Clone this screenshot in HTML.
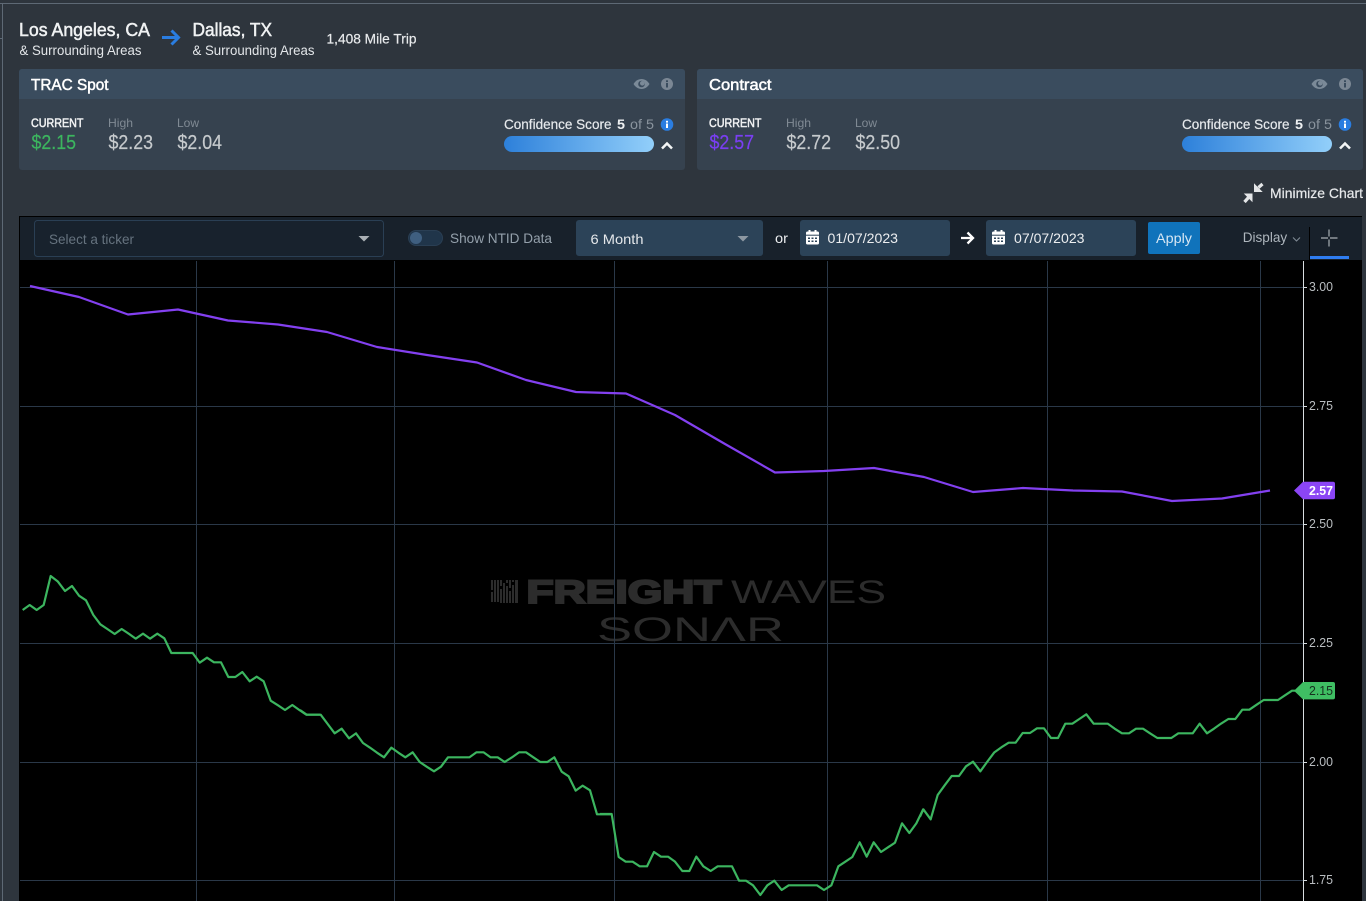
<!DOCTYPE html>
<html lang="en">
<head>
<meta charset="utf-8">
<title>Los Angeles, CA to Dallas, TX</title>
<style>
html,body{margin:0;padding:0;width:1366px;height:901px;overflow:hidden;background:#2e353d}
svg{display:block;position:absolute;left:0;top:0}
text{font-family:"Liberation Sans",Arial,sans-serif;white-space:pre}
.med{stroke:currentColor;stroke-width:.5px}
.lt{stroke:currentColor;stroke-width:.2px}
</style>
</head>
<body>
<svg width="1366" height="901" viewBox="0 0 1366 901" xmlns="http://www.w3.org/2000/svg">
<defs>
<linearGradient id="conf" x1="0" x2="1" y1="0" y2="0"><stop offset="0" stop-color="#2d80da"/><stop offset="1" stop-color="#92cffa"/></linearGradient>
<g id="card">
  <rect x="19" y="69" width="666" height="101" rx="3" fill="#36424f"/>
  <path d="M19 99V72a3 3 0 0 1 3-3h660a3 3 0 0 1 3 3v27z" fill="#3a4c5e"/>
  <text x="31" y="127" font-size="12" class="med" color="#f2f3f4" fill="#f2f3f4" textLength="52.500" lengthAdjust="spacingAndGlyphs">CURRENT</text>
  <text x="108" y="127" font-size="12" fill="#808a94" textLength="25" lengthAdjust="spacingAndGlyphs">High</text>
  <text x="177" y="127" font-size="12" fill="#808a94" textLength="22" lengthAdjust="spacingAndGlyphs">Low</text>
  <path d="M633.500 84c2-3.300 4.800-5 8-5s6 1.700 8 5c-2 3.300-4.800 5-8 5s-6-1.700-8-5z" fill="#7b8a98"/>
  <circle cx="641.500" cy="84" r="3.300" fill="#3a4c5e"/><circle cx="642.300" cy="83.300" r="2.300" fill="#7b8a98"/>
  <circle cx="667" cy="84" r="6" fill="#7b8794"/>
  <rect x="666" y="83" width="2" height="4.500" fill="#3a4c5e"/><rect x="666" y="80.300" width="2" height="1.800" fill="#3a4c5e"/>
  <text x="504" y="129" font-size="14" class="lt" color="#e6e9ec" fill="#e6e9ec" textLength="107.500" lengthAdjust="spacingAndGlyphs">Confidence Score</text>
  <text x="617" y="129" font-size="14" font-weight="bold" fill="#eef0f2" textLength="8" lengthAdjust="spacingAndGlyphs">5</text>
  <text x="630" y="129" font-size="14" fill="#8a949e" textLength="24" lengthAdjust="spacingAndGlyphs">of 5</text>
  <circle cx="667" cy="124.500" r="6.300" fill="#2a7de1"/>
  <rect x="666" y="123.500" width="2" height="4.500" fill="#fff"/><rect x="666" y="120.800" width="2" height="1.800" fill="#fff"/>
  <rect x="504" y="136" width="150" height="16" rx="8" fill="url(#conf)"/>
  <path d="M662 148.500l5-5 5 5" fill="none" stroke="#f4f6f7" stroke-width="2.500"/>
</g>
<g id="cal">
  <rect x="0" y="1.500" width="13" height="13" rx="1.500" fill="#fff"/>
  <rect x="2.500" y="0" width="2" height="3.500" fill="#fff"/><rect x="8.500" y="0" width="2" height="3.500" fill="#fff"/>
  <rect x="0" y="4.700" width="13" height="1" fill="#2c4358"/>
  <path d="M2 7.500h2v1.500H2zM5.500 7.500h2v1.500h-2zM9 7.500h2v1.500H9zM2 10.500h2V12H2zM5.500 10.500h2V12h-2zM9 10.500h2V12H9z" fill="#2c4358"/>
</g>
</defs>

<!-- page edge lines -->
<rect x="0" y="3" width="1366" height="1" fill="#5e6975"/>
<rect x="2" y="3" width="1" height="898" fill="#5e6975"/>
<rect x="0" y="38" width="2" height="1" fill="#5e6975"/>

<!-- lane header -->
<text x="19" y="36" font-size="18" class="med" color="#f0f2f3" fill="#f0f2f3" textLength="131" lengthAdjust="spacingAndGlyphs">Los Angeles, CA</text>
<text x="19.500" y="55" font-size="13.500" fill="#e3e6e9" textLength="122" lengthAdjust="spacingAndGlyphs">&amp; Surrounding Areas</text>
<path d="M162 37.500h16M171.500 30.500l7 7-7 7" fill="none" stroke="#2a7de1" stroke-width="3"/>
<text x="192.500" y="36" font-size="18" class="med" color="#f0f2f3" fill="#f0f2f3" textLength="79.500" lengthAdjust="spacingAndGlyphs">Dallas, TX</text>
<text x="192.500" y="55" font-size="13.500" fill="#e3e6e9" textLength="122" lengthAdjust="spacingAndGlyphs">&amp; Surrounding Areas</text>
<text x="326.500" y="43.500" font-size="14" class="lt" color="#e8eaec" fill="#e8eaec" textLength="90" lengthAdjust="spacingAndGlyphs">1,408 Mile Trip</text>

<!-- cards -->
<use href="#card"/>
<text x="31" y="90" font-size="16" class="med" color="#fff" fill="#fff" textLength="77.500" lengthAdjust="spacingAndGlyphs">TRAC Spot</text>
<text x="31.500" y="149" font-size="20" class="lt" color="#3cb55f" fill="#3cb55f" textLength="44.500" lengthAdjust="spacingAndGlyphs">$2.15</text>
<text x="108.500" y="149" font-size="20" class="lt" color="#c6cacd" fill="#c6cacd" textLength="44.500" lengthAdjust="spacingAndGlyphs">$2.23</text>
<text x="177.500" y="149" font-size="20" class="lt" color="#c6cacd" fill="#c6cacd" textLength="44.500" lengthAdjust="spacingAndGlyphs">$2.04</text>

<use href="#card" x="678"/>
<text x="709" y="90" font-size="16" class="med" color="#fff" fill="#fff" textLength="62.500" lengthAdjust="spacingAndGlyphs">Contract</text>
<text x="709.500" y="149" font-size="20" class="lt" color="#7a3ff2" fill="#7a3ff2" textLength="44.500" lengthAdjust="spacingAndGlyphs">$2.57</text>
<text x="786.500" y="149" font-size="20" class="lt" color="#c6cacd" fill="#c6cacd" textLength="44.500" lengthAdjust="spacingAndGlyphs">$2.72</text>
<text x="855.500" y="149" font-size="20" class="lt" color="#c6cacd" fill="#c6cacd" textLength="44.500" lengthAdjust="spacingAndGlyphs">$2.50</text>

<!-- minimize chart -->
<path d="M1254.500 191.500v-7l7 7zM1252 194h-7l7 7z" fill="#e4e6e8" stroke="#e4e6e8" stroke-width="1"/>
<path d="M1258.500 187.500l4-3.500M1248.500 197.500l-4 4.500" fill="none" stroke="#e4e6e8" stroke-width="3.200"/>
<text x="1270" y="198" font-size="14" class="lt" color="#e8eaec" fill="#e8eaec" textLength="93" lengthAdjust="spacingAndGlyphs">Minimize Chart</text>

<!-- chart frame -->
<rect x="19" y="216" width="1343" height="685" fill="#000"/>
<rect x="20" y="217" width="1342" height="43" fill="#18212b"/>

<!-- toolbar -->
<rect x="34.500" y="220.500" width="349" height="36" rx="3" fill="#18222d" stroke="#2a3f54"/>
<text x="49" y="244" font-size="14" fill="#66737f" textLength="85" lengthAdjust="spacingAndGlyphs">Select a ticker</text>
<path d="M358.500 236h11l-5.500 5.500z" fill="#a9afb4"/>
<rect x="408.500" y="230.500" width="34" height="15" rx="7.500" fill="#20354a" stroke="#2a3f54"/>
<circle cx="416" cy="238" r="6" fill="#3f5f80"/>
<text x="450" y="243" font-size="14" fill="#94a0ab" textLength="102" lengthAdjust="spacingAndGlyphs">Show NTID Data</text>

<rect x="576" y="220" width="187" height="36" rx="3" fill="#2c4358"/>
<text x="590.500" y="244" font-size="14" fill="#e4e7ea" textLength="53" lengthAdjust="spacingAndGlyphs">6 Month</text>
<path d="M737.500 236h11l-5.500 5.500z" fill="#8d98a2"/>
<text x="775" y="243" font-size="14" fill="#eceef0" textLength="13" lengthAdjust="spacingAndGlyphs">or</text>

<rect x="800" y="220" width="150" height="36" rx="3" fill="#2c4358"/>
<use href="#cal" x="806" y="230"/>
<text x="827.500" y="243" font-size="14" fill="#eceef0" textLength="70.500" lengthAdjust="spacingAndGlyphs">01/07/2023</text>
<path d="M961 238h11M967.500 232.500l5.500 5.500-5.500 5.500" fill="none" stroke="#fff" stroke-width="2.300"/>
<rect x="986" y="220" width="150" height="36" rx="3" fill="#2c4358"/>
<use href="#cal" x="992" y="230"/>
<text x="1014" y="243" font-size="14" fill="#eceef0" textLength="70.500" lengthAdjust="spacingAndGlyphs">07/07/2023</text>
<rect x="1148" y="222" width="52" height="32" rx="2" fill="#1073bb"/>
<text x="1156" y="243" font-size="14" fill="#d6e6f3" textLength="36" lengthAdjust="spacingAndGlyphs">Apply</text>

<text x="1242.700" y="242" font-size="14" fill="#aeb6bd" textLength="44.500" lengthAdjust="spacingAndGlyphs">Display</text>
<path d="M1293 237.500l3.500 3.500 3.500-3.500" fill="none" stroke="#7f8a94" stroke-width="1.100"/>
<rect x="1309" y="227" width="1" height="33" fill="#000"/>
<path d="M1321 238h7M1330 238h7.500M1329 229.500v7M1329 239.500v7" stroke="#a8aeb3" stroke-width="1.200" fill="none"/>
<rect x="1310" y="256" width="39" height="3" fill="#2f7df0"/>

<!-- watermark -->
<g fill="#2c2c2c">
  <path d="M491 580h2v10h-2zM491 592h2v10h-2zM494 580h2v22h-2zM497 580h2v22h-2zM500 580h2v6h-2zM500 589h2v14h-2zM503 583h2v20h-2zM506 580h2v3h-2zM506 586h2v17h-2zM509 580h2v8h-2zM509 591h2v12h-2zM512 580h2v2h-2zM512 585h2v18h-2zM515 580h3v23h-3z"/>
  <text x="526.500" y="603" font-size="32" font-weight="bold" stroke="#2c2c2c" stroke-width="2" textLength="195" lengthAdjust="spacingAndGlyphs">FREIGHT</text>
  <text x="731" y="603" font-size="32" textLength="155" lengthAdjust="spacingAndGlyphs">WAVES</text>
  <text x="597" y="641" font-size="34" textLength="187" lengthAdjust="spacingAndGlyphs">SONΛR</text>
</g>

<!-- grid -->
<g stroke="#2a3848" stroke-width="1" fill="none">
  <path d="M20 287.500H1303M20 406.500H1303M20 524.500H1303M20 643.500H1303M20 762.500H1303M20 880.500H1303"/>
  <path d="M196.500 261V901M394.500 261V901M614.500 261V901M827.500 261V901M1047.500 261V901M1260.500 261V901"/>
</g>
<rect x="1303" y="261" width="1" height="640" fill="#d8dde0"/>
<path d="M1304 287.500h3M1304 406.500h3M1304 524.500h3M1304 643.500h3M1304 762.500h3M1304 880.500h3" stroke="#d8dde0" fill="none"/>
<g font-size="12.500" fill="#b9bdc0">
  <text x="1309" y="291" textLength="24" lengthAdjust="spacingAndGlyphs">3.00</text>
  <text x="1309" y="410" textLength="24" lengthAdjust="spacingAndGlyphs">2.75</text>
  <text x="1309" y="528" textLength="24" lengthAdjust="spacingAndGlyphs">2.50</text>
  <text x="1309" y="647" textLength="24" lengthAdjust="spacingAndGlyphs">2.25</text>
  <text x="1309" y="766" textLength="24" lengthAdjust="spacingAndGlyphs">2.00</text>
  <text x="1309" y="884" textLength="24" lengthAdjust="spacingAndGlyphs">1.75</text>
</g>

<!-- contract line -->
<polyline fill="none" stroke="#8340f0" stroke-width="2.200" stroke-linejoin="round" points="30,286 79,297 128,314.500 178,309.500 228,320.500 278,324.500 327,332 377,347 427,355 477,362.500 526,380 576,392 626,393.500 675,415 725,444 775,472.500 824,471 874,468 924,477 973,492 1023,488 1073,490.500 1122,491.500 1172,501 1222,498.500 1270,490.500"/>

<!-- spot line -->
<g fill="none" stroke="#3cb55f" stroke-width="6.600" stroke-linejoin="round">
  <polyline transform="translate(0 560) scale(.33333)" points="68,150 89,135 110,150 131,135 152,48 173,64 195,93 216,78 237,107 258,121 280,165 301,193 322,207 344,222 365,207 386,221 407,236 429,221 450,236 472,221 493,235 514,279 535,279 557,279 578,279 599,308 621,293 642,307 663,307 685,351 706,351 727,336 749,364 770,350 791,364 812,422 834,436 855,450 877,435 898,450 919,464 940,464 960,464"/>
  <polyline transform="translate(300 690) scale(.33333)" points="0,60 20,74 41,74 62,74 83,102 104,130 125,116 147,145 168,130 189,159 210,173 231,188 252,202 274,173 295,188 316,202 338,187 359,216 380,230 402,244 423,230 444,202 465,202 487,202 508,202 529,187 551,187 572,202 593,202 614,216 636,202 657,187 678,187 700,202 721,216 742,216 763,202 785,245 806,259 827,302 848,287 870,301 891,373 912,373 934,373"/>
  <polyline transform="translate(600 770) scale(.33333)" points="0,132 35,132 56,261 77,275 98,275 119,289 141,289 162,246 183,260 204,260 225,275 247,303 268,303 289,260 310,289 332,303 353,289 374,289 396,289 417,332 438,332 459,346 481,375 502,346 523,332 545,360 566,346 587,346 608,346 630,346 651,346 672,360 694,346 715,289 736,275 757,261 779,217 800,260 821,217 843,246 864,232 885,218 906,160 928,189 949,160 970,117"/>
  <polyline transform="translate(920 680) scale(.33333)" points="0,410 10,388 32,418 53,345 74,316 95,288 117,288 138,259 159,245 181,274 202,245 223,217 244,202 266,188 287,188 308,159 330,159 351,145 372,145 393,174 414,174 436,131 457,131 478,117 499,103 521,131 542,131 563,131 584,146 606,160 627,160 648,146 669,146 690,160 712,174 733,174 754,174 775,160 797,160 818,160 839,131 861,160 882,146 903,131 925,117 946,117 967,89 988,89 1010,74 1031,60 1052,60 1074,60 1095,46 1116,32 1125,32"/>
</g>

<!-- price tags -->
<path d="M1294 490.500l9-8.800h30a2 2 0 0 1 2 2v13.600a2 2 0 0 1-2 2h-30z" fill="#8b45f5"/>
<text x="1309" y="495" font-size="12.500" font-weight="bold" fill="#fff" textLength="24" lengthAdjust="spacingAndGlyphs">2.57</text>
<path d="M1294 690.700l9-8.700h30a2 2 0 0 1 2 2v13.400a2 2 0 0 1-2 2h-30z" fill="#3fbe63"/>
<text x="1309" y="695" font-size="12.500" fill="#17301f" textLength="24" lengthAdjust="spacingAndGlyphs">2.15</text>
</svg>
</body>
</html>
